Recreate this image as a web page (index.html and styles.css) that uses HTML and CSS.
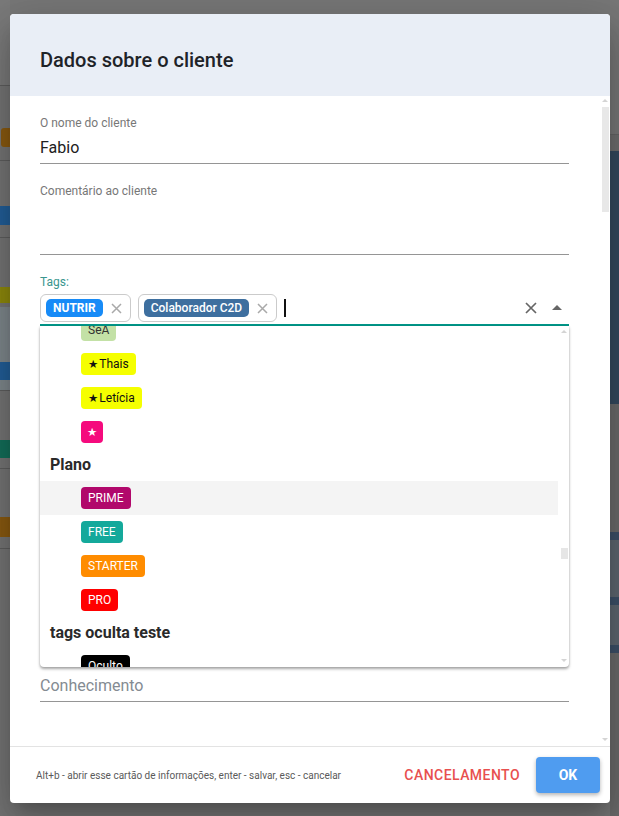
FILE: index.html
```html
<!DOCTYPE html>
<html lang="pt">
<head>
<meta charset="utf-8">
<title>Dados sobre o cliente</title>
<link rel="stylesheet" href="styles.css">
</head>
<body>
<div class="page">
  <div class="strip strip-left">
    <div class="bg"></div><div class="ln"></div><div class="bg"></div>
    <div class="bk orange rl"></div><div class="bg"></div><div class="ln"></div><div class="bg"></div>
    <div class="bk blue"></div><div class="bg"></div><div class="ln"></div><div class="bg"></div>
    <div class="bk olive"></div><div class="bg"></div><div class="hl"></div>
    <div class="bk blue"></div><div class="hl"></div><div class="ln"></div><div class="bg"></div>
    <div class="bk green"></div><div class="bg"></div><div class="ln"></div><div class="bg"></div>
    <div class="bk orange"></div><div class="bg"></div><div class="ln"></div><div class="bg"></div>
  </div>

  <div class="center">
    <div class="modal">
      <div class="modal-header">
        <h1 class="title">Dados sobre o cliente</h1>
      </div>

      <div class="modal-body">
        <div class="form">
          <div class="field">
            <span class="label">O nome do cliente</span>
            <div class="input">Fabio</div>
          </div>

          <div class="field">
            <span class="label">Comentário ao cliente</span>
            <div class="textarea"></div>
          </div>

          <div class="field field-tags">
            <span class="label label-focus">Tags:</span>
            <div class="tag-input">
              <span class="tag">
                <span class="pill pill-nutrir">NUTRIR</span>
                <svg class="tag-x" viewBox="0 0 11 11"><path d="M1 1L10 10M10 1L1 10"/></svg>
              </span>
              <span class="tag">
                <span class="pill pill-c2d">Colaborador C2D</span>
                <svg class="tag-x" viewBox="0 0 11 11"><path d="M1 1L10 10M10 1L1 10"/></svg>
              </span>
              <span class="caret"></span>
              <span class="spacer"></span>
              <svg class="clear-x" viewBox="0 0 12 12"><path d="M1 1L11 11M11 1L1 11"/></svg>
              <span class="toggle"></span>
            </div>

            <div class="dropdown">
              <div class="options">
                <div class="options-inner">
                  <div class="opt"><span class="chip chip-sea">SeA</span></div>
                  <div class="opt"><span class="chip chip-yellow"><span class="star">★</span>Thais</span></div>
                  <div class="opt"><span class="chip chip-yellow"><span class="star">★</span>Letícia</span></div>
                  <div class="opt"><span class="chip chip-pink"><span class="star">★</span></span></div>
                  <div class="group">Plano</div>
                  <div class="opt opt-active"><span class="chip chip-prime">PRIME</span></div>
                  <div class="opt"><span class="chip chip-free">FREE</span></div>
                  <div class="opt"><span class="chip chip-starter">STARTER</span></div>
                  <div class="opt"><span class="chip chip-pro">PRO</span></div>
                  <div class="group">tags oculta teste</div>
                  <div class="opt"><span class="chip chip-hidden">Oculto</span></div>
                </div>
              </div>
              <div class="dd-scroll">
                <span class="sb-up"></span>
                <span class="dd-thumb"></span>
                <span class="sb-down"></span>
              </div>
            </div>
          </div>

          <div class="field field-know">
            <div class="input placeholder">Conhecimento</div>
          </div>
        </div>

        <div class="vscroll">
          <span class="sb-up"></span>
          <span class="body-thumb"></span>
          <span class="sb-down"></span>
        </div>
      </div>

      <div class="modal-footer">
        <span class="hint">Alt+b - abrir esse cartão de informações, enter - salvar, esc - cancelar</span>
        <button class="btn-cancel">CANCELAMENTO</button>
        <button class="btn-ok">OK</button>
      </div>
    </div>
  </div>

  <div class="strip strip-right">
    <div class="rg"></div><div class="rln"></div><div class="rg2"></div>
    <div class="navy"></div><div class="rg3"></div>
    <div class="bar"></div><div class="slate"></div>
    <div class="bar"></div><div class="slate"></div>
    <div class="bar"></div><div class="rg3"></div>
  </div>
</div>
</body>
</html>
```

FILE: styles.css
```css
* { box-sizing: border-box; }

html, body {
  margin: 0;
  padding: 0;
}

body {
  width: 619px;
  height: 816px;
  overflow: hidden;
  background: #777;
  font-family: Roboto, "Liberation Sans", Arial, sans-serif;
}

.page {
  display: grid;
  grid-template-columns: 10px 600px 9px;
  height: 816px;
}

/* ---- dimmed app behind the dialog ---- */
.strip {
  display: grid;
  height: 816px;
}

.strip-left {
  grid-template-rows: 85px 1px 42px 19px 13px 1px 45px 19px 12px 1px 49px 16px 4px 55px 18px 10px 1px 49px 18px 10px 1px 48px 20px 11px 1px 1fr;
}

.strip-left .bg { background: #757575; }
.strip-left .bg:first-child { background: #7a7a7a; }
.strip-left .ln { background: #5e5e5e; }
.strip-left .hl { background: #7e878c; }
.bk.orange { background: #8a5a10; }
.bk.rl { margin-left: 1px; border-radius: 3px 0 0 3px; }
.bk.blue { background: #225e98; }
.bk.olive { background: #8e8a0c; }
.bk.green { background: #146f5a; }

.strip-right {
  grid-template-rows: 134px 1px 16px 253px 128px 8px 57px 8px 40px 8px 1fr;
}
.rg { background: #777; }
.rln { background: #656565; }
.rg2 { background: #6e6e6e; }
.navy { background: #34495e; }
.rg3 { background: #6b6b6b; }
.bar { background: #3d5068; }
.slate { background: #5e6770; }

/* ---- dialog ---- */
.center {
  padding-top: 14px;
}

.modal {
  position: relative;
  z-index: 1;
  height: 789px;
  background: #fff;
  border-radius: 4px;
  overflow: hidden;
  display: flex;
  flex-direction: column;
  box-shadow: 0 11px 15px -7px rgba(0,0,0,.2), 0 24px 38px 3px rgba(0,0,0,.14), 0 9px 46px 8px rgba(0,0,0,.12);
}

.modal-header {
  flex: none;
  height: 82px;
  background: #e9eef6;
  padding: 34px 30px 0;
}

.title {
  margin: 0;
  font-size: 20px;
  line-height: 24px;
  font-weight: 500;
  color: #1e2328;
}

.modal-body {
  flex: 1;
  min-height: 0;
  display: flex;
}

.form {
  flex: 1;
  min-width: 0;
  padding: 20px 31px 0 30px;
  overflow: hidden;
}

.field {
  position: relative;
  margin-bottom: 20px;
}

.label {
  display: block;
  font-size: 12px;
  line-height: 14px;
  color: #777;
}

.label-focus {
  color: #3a968e;
}

.input {
  margin-top: 6px;
  font-size: 16px;
  line-height: 24px;
  color: #212121;
  padding-bottom: 3px;
  border-bottom: 1px solid #959595;
}

.textarea {
  height: 57px;
  border-bottom: 1px solid #959595;
}

/* tags */
.tag-input {
  margin-top: 5px;
  height: 32px;
  padding-bottom: 2px;
  padding-right: 7px;
  border-bottom: 2px solid #009688;
  display: flex;
  align-items: center;
  gap: 7px;
}

.tag {
  height: 28px;
  display: flex;
  align-items: center;
  gap: 8px;
  padding: 0 8px 0 5px;
  border: 1px solid #cbcbcb;
  border-radius: 6px;
}

.pill {
  height: 18px;
  line-height: 18px;
  padding: 0 7px;
  border-radius: 5px;
  color: #fff;
  font-size: 12px;
  font-weight: 700;
}

.pill-nutrir { background: #178bf7; }
.pill-c2d { background: #3e6f9f; font-weight: 500; }

.tag-x {
  width: 11px;
  height: 11px;
  fill: none;
  stroke: #a9a9a9;
  stroke-width: 1.5;
}

.caret {
  width: 2px;
  height: 18px;
  background: #111;
}

.spacer { flex: 1; }

.clear-x {
  width: 12px;
  height: 12px;
  fill: none;
  stroke: #666;
  stroke-width: 1.7;
  margin-right: 8px;
}

.toggle {
  width: 0;
  height: 0;
  border-left: 5px solid transparent;
  border-right: 5px solid transparent;
  border-bottom: 5px solid #666;
  margin-bottom: 2px;
}

/* dropdown menu */
.dropdown {
  position: absolute;
  top: 100%;
  left: 0;
  right: 0;
  z-index: 2;
  height: 341px;
  display: flex;
  background: #fff;
  border-radius: 0 0 4px 4px;
  box-shadow: 0 2px 3px rgba(0,0,0,.35), 0 0 2px rgba(0,0,0,.12);
}

.options {
  flex: 1;
  overflow: hidden;
}

.options-inner {
  margin-top: -13px;
}

.opt {
  height: 34px;
  display: flex;
  align-items: center;
  padding-left: 41px;
}

.opt-active {
  background: #f4f4f4;
}

.group {
  height: 32px;
  line-height: 32px;
  padding-left: 10px;
  font-size: 16px;
  font-weight: 700;
  color: #2a2a2a;
}

.chip {
  height: 22px;
  line-height: 22px;
  padding: 0 7px;
  border-radius: 4px;
  font-size: 12px;
  color: #fff;
}

.star {
  font-family: "DejaVu Sans", sans-serif;
  font-size: 11.5px;
  margin-right: 1px;
}

.chip-sea { background: #c3e1a6; color: #333; }
.chip-yellow { background: #f5ff00; color: #111; }
.chip-pink { background: #f50a7d; padding: 0 6px; }
.chip-pink .star { margin-right: 0; }
.chip-prime { background: #b1086b; }
.chip-free { background: #14a99b; }
.chip-starter { background: #ff8c00; }
.chip-pro { background: #ff0000; }
.chip-hidden { background: #000; }

/* scrollbars */
.dd-scroll {
  width: 11px;
  flex: none;
  display: flex;
  flex-direction: column;
  align-items: center;
  padding: 4px 1px 5px 2px;
}

.sb-up {
  width: 0;
  height: 0;
  border-left: 3px solid transparent;
  border-right: 3px solid transparent;
  border-bottom: 3px solid #d4d4d4;
}

.sb-down {
  margin-top: auto;
  width: 0;
  height: 0;
  border-left: 3px solid transparent;
  border-right: 3px solid transparent;
  border-top: 3px solid #d4d4d4;
}

.dd-thumb {
  margin-top: 215px;
  width: 7px;
  height: 11px;
  background: #e6e6e6;
}

.vscroll {
  width: 10px;
  flex: none;
  display: flex;
  flex-direction: column;
  align-items: center;
  padding: 3px 1px 5px 1px;
}

.body-thumb {
  margin-top: 5px;
  width: 7px;
  height: 105px;
  background: #e8e8e8;
}

.field-know {
  margin-top: 348px;
}

.field-know .input {
  margin-top: 0;
}

.placeholder {
  color: #848b92;
}

/* footer */
.modal-footer {
  flex: none;
  height: 57px;
  border-top: 1px solid #e3e3e3;
  display: flex;
  align-items: center;
  padding: 0 10px 0 26px;
}

.hint {
  flex: 1;
  font-size: 10px;
  color: #5a5a5a;
}

.btn-cancel {
  background: none;
  border: 0;
  padding: 0;
  margin-right: 16px;
  color: #e8504f;
  font-family: Roboto, "Liberation Sans", sans-serif;
  font-size: 14px;
  font-weight: 500;
  letter-spacing: .45px;
  line-height: 36px;
}

.btn-ok {
  width: 64px;
  height: 36px;
  border: 0;
  border-radius: 4px;
  background: #4f9cf0;
  color: #fff;
  font-family: Roboto, "Liberation Sans", sans-serif;
  font-size: 14px;
  font-weight: 700;
  box-shadow: 0 2px 4px rgba(0,0,0,.3);
}
```
